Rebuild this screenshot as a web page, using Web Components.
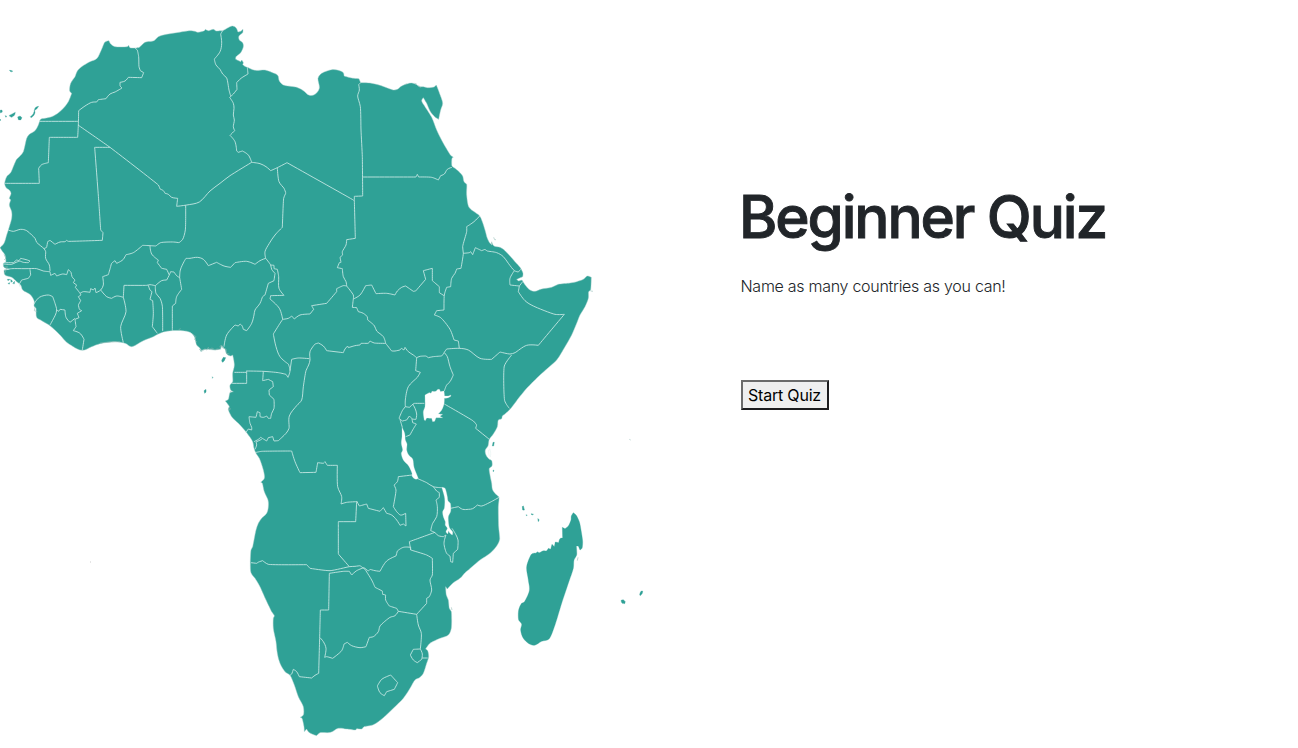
<!DOCTYPE html>
<html lang="en">
<head>
<meta charset="utf-8">
<title>Beginner Quiz</title>
<style>
html, body { margin: 0; height: 100%; background: #fff; overflow: hidden; }
body { font-family: Inter, "Liberation Sans", sans-serif; color: #212529; }
</style>
</head>
<body>
<quiz-page>
  <africa-map slot="map"></africa-map>
  <quiz-intro slot="intro">
    <span slot="title">Beginner Quiz</span>
    <span slot="hint">Name as many countries as you can!</span>
    <quiz-button slot="action">Start Quiz</quiz-button>
  </quiz-intro>
</quiz-page>
<script>
class QuizPage extends HTMLElement {
  constructor() {
    super();
    this.attachShadow({ mode: 'open' }).innerHTML = `
      <style>
        :host { display: grid; grid-template-columns: 649px 1fr; height: 748px; overflow: hidden; }
      </style>
      <slot name="map"></slot><slot name="intro"></slot>`;
  }
}

class QuizIntro extends HTMLElement {
  constructor() {
    super();
    this.attachShadow({ mode: 'open' }).innerHTML = `
      <style>
        :host { display: flex; flex-direction: column; align-items: flex-start; padding: 181px 0 0 91.5px; }
        h1 { margin: 0 0 0 -1.5px; font-size: 58.5px; line-height: 72px; font-weight: 500; letter-spacing: -2.1px; -webkit-text-stroke: .9px currentColor; white-space: nowrap; }
        p { margin: 21px 0 0; font-size: 16px; line-height: 24px; font-weight: 300; letter-spacing: -.28px; white-space: nowrap; }
        .action { margin-top: 82px; }
      </style>
      <h1><slot name="title"></slot></h1>
      <p><slot name="hint"></slot></p>
      <div class="action"><slot name="action"></slot></div>`;
  }
}

class QuizButton extends HTMLElement {
  constructor() {
    super();
    this.attachShadow({ mode: 'open' }).innerHTML = `
      <style>
        :host { display: block; }
        button { display: block; box-sizing: border-box; width: 88px; height: 30px; margin: 0; padding: 0;
          font: 400 16px/24px Inter, sans-serif; letter-spacing: -.2px; color: #000; background: #efefef; white-space: nowrap;
          border: 2px solid; border-color: #6b6b6b #1c1c1e #1c1c1e #6b6b6b; border-radius: 0; }
      </style>
      <button type="button"><slot></slot></button>`;
  }
}

/* Map sheets: origin of each sheet in page units; points on a sheet are in thirds of a unit. */
const SHEETS = { A: [0, 10], B: [210, 10], C: [0, 180], D: [200, 180], E: [400, 150], F: [200, 340], G: [390, 340], H: [240, 530], I: [500, 420] };

/* Handle vector at a vertex: rounds gentle turns, keeps sharp corners and long straight runs. */
function handle(a, b, c, limit) {
  if (!a || !c) return [0, 0];
  const u = [b[0] - a[0], b[1] - a[1]], v = [c[0] - b[0], c[1] - b[1]];
  const lu = Math.hypot(...u), lv = Math.hypot(...v);
  if (!lu || !lv || (u[0] * v[0] + u[1] * v[1]) / (lu * lv) < limit) return [0, 0];
  const t = [u[0] / lu + v[0] / lv, u[1] / lu + v[1] / lv];
  const k = Math.min(0.36 * Math.min(lu, lv), 4) / Math.hypot(...t);
  return [t[0] * k, t[1] * k];
}

/* "A 1,2 3,4 B 5,6" -> SVG path data; a sheet letter switches the origin, ";" lifts the pen. */
function trace(text, close) {
  let origin = [0, 0];
  return text.split(';').map(line => {
    const p = [];
    for (const token of line.trim().split(/\s+/)) {
      if (SHEETS[token]) { origin = SHEETS[token]; continue; }
      if (!token) continue;
      const [x, y] = token.split(',').map(Number);
      p.push([origin[0] + x / 3, origin[1] + y / 3]);
    }
    const n = p.length;
    const at = i => close ? p[(i + n) % n] : p[i];
    const h = p.map((q, i) => handle(at(i - 1), q, at(i + 1), close ? 0.5 : 0.8));
    let d = 'M' + p[0].map(v => v.toFixed(2)).join(' ');
    for (let i = 1; i < n + (close ? 1 : 0); i++) {
      const a = p[i - 1], b = p[i % n], ha = h[i - 1], hb = h[i % n];
      d += 'C' + [a[0] + ha[0], a[1] + ha[1], b[0] - hb[0], b[1] - hb[1], b[0], b[1]].map(v => v.toFixed(2)).join(' ');
    }
    return d + (close ? 'Z' : '');
  }).join('');
}

const LAND = `A 32,570 28,565 33,550 28,540 20,535 14,522 20,500 32,488 42,465 50,448 58,440 70,425 80,385 88,373 105,362 115,345 122,328 135,325 160,318 185,300 205,275 215,250 209,243 212,220 225,200 232,183 245,170 270,155 290,146 303,122 315,96 327,92 333,103 345,110 382,110 386,106 390,113 405,114 418,112 435,97 462,92 475,80 500,73 530,68 570,62 585,64 592,67 612,63 616,58 625,62 640,58 648,63 660,62
B 38,62 60,50 68,48 78,53 84,66 92,64 99,58 98,68 87,78 88,90 98,98 100,110 92,128 78,140 77,148 92,155 95,150 100,158 98,163 103,168 112,172 135,181 165,180 185,187 203,196 208,213 220,225 260,232 280,242 298,256 315,253 328,235 324,205 335,190 365,179 385,181 400,188 402,198 425,204 447,206 452,218 480,219 510,226 550,240 562,238 575,228 590,222 605,219 620,224 628,230 640,230 652,233 672,231 679,225 688,248 698,280 692,300 686,328 674,320 660,303 650,280 640,263 635,272 645,290 665,322 680,360 700,400 722,436 730,442 726,445 726,468 735,475 750,488
E 188,78 192,95 200,103 200,135 207,172 225,187 239,198 247,215 255,240 262,265 270,280 276,285 275,277 282,288 300,292 315,302 330,318 345,335 360,352 369,370 368,380 350,388 355,393 366,390 378,408 390,420 405,424 425,417 455,412 475,403 510,399 530,395 550,388 562,378 574,382 572,420 566,425 565,445 555,470 540,495 530,520 515,555 495,590 470,630
G 450,105 410,145 380,182 360,208 345,222 337,228 335,236 325,240 322,260 308,285 298,298 294,318 286,330 288,345 297,357 305,362 306,378 298,385 300,405 305,430 308,450 320,465 327,472 325,500 326,560 329,598 322,615 300,640 270,660 235,690
H 675,128 660,145 640,158 622,177 617,170 619,195 625,210 628,235 634,245 634,295 625,315 600,325 570,340 557,357 563,362 566,380 560,400 550,430 540,442 525,450 510,475 490,505 460,535 430,563 400,584 372,590 365,597 350,596 347,600 320,597 295,595 272,607 240,608 230,617 218,613 205,605 200,597 193,605 192,590 186,565 180,562 190,555 190,530 175,500 163,465 150,436 135,425 120,400 112,370 108,335 100,295 100,265 103,257 95,245 78,210 60,170 45,145 33,128 31,98 33,60 38,50 48,0
F 175,550 185,535 200,520 205,500 204,480 193,455 187,430 182,427 193,415 190,390 178,355 168,340 162,325 158,305 140,278 115,250 95,230 85,208 88,200 76,183 85,178 90,158 100,155 92,150 90,135 98,125 98,100 103,75 98,45 92,48 80,42 75,28 65,18 62,27 45,30 20,28 0,32
C 605,515 600,505 590,495 583,470 570,457 548,452 515,452 490,456 475,462 460,470 430,482 395,500 375,490 345,485 300,491 275,500 247,511 220,500 200,487 180,465 150,437 125,422 110,412 108,385 102,378 103,365 92,345 68,330 62,315 50,305 35,292 15,285 12,270 28,268 12,262 10,250 18,245 15,225 8,215 0,203 12,190 20,165 25,150 35,115 35,95 28,75`;

const ISLANDS = `I 220,278 228,285 238,305 243,330 248,365 246,385 240,390 235,378 229,378 230,405 222,420 220,445 205,490 185,550 165,615 147,657 125,664 100,676 72,658 62,630 65,612 56,600 56,570 65,550 72,547 88,512 85,480 80,440 95,402 108,399 112,395 118,398 128,393 140,392 145,385 152,388 156,373 163,380 166,366 176,368 180,356 188,354 187,322 195,326 205,318 213,300 214,288
; 363,541 370,539 376,545 374,551 366,549 ; 419,524 423,514 428,513 427,520 421,527 ; 67,260 70,258 73,270 69,270 ; 114,296 117,299 115,303 ; 94,282 101,283 96,285 ; 78,284 82,286 79,287
; A 28,181 36,182 39,184 33,186 ; 0,301 6,300 7,306 1,309 ; 28,316 38,311 46,307 43,316 35,322 29,319 ; 53,321 60,318 66,323 62,330 55,329 ; 91,320 100,311 103,301 105,308 100,318 93,323 ; 103,302 106,293 116,289 110,297 ; 15,317 20,318 18,322 ; 0,328 3,330 1,332
; F 65,62 70,52 77,53 73,62 68,67 ; 12,152 18,148 18,156 14,160 ; 37,110 39,113 37,115
; G 397,500 400,498 403,510 398,510 ; 424,521 429,523 426,525 ; 444,536 447,542 445,545 ; 309,307 313,307 311,318 307,318 ; 309,390 312,391 310,396
; C 22,298 30,298 24,302 ; 32,298 38,304 33,307 ; 24,310 30,308 27,313 ; 38,310 44,304 43,312`;

const LAKES = `G 105,165 118,158 123,160 126,154 138,154 142,149 148,148 152,155 162,153 164,168 175,168 182,165 183,168 175,173 163,175 162,192 155,210 145,222 158,223 150,229 158,233 138,233 134,244 128,245 125,235 110,234 106,242 103,240 100,215 105,200
; 36,262 44,280 46,300 51,312 50,330 56,345 68,357 72,382 85,415 78,418 67,410 66,400 56,378 40,360 34,340 38,330 34,310 36,290
; 155,442 165,445 172,470 174,482 181,490 182,514 175,530 178,562 188,576 187,585 180,580 176,572 173,582 168,575 172,565 166,556 166,545 160,530 158,515 163,505 164,475
; 296,330 300,327 302,340 301,350 297,345`;

const BORDERS = `A 405,114 412,120 416,140 417,170 421,182 431,188 425,203 385,202 375,213 360,217 360,228 366,234 345,246 330,252 318,266 295,269 290,276 275,277 255,288 236,302 235,345 233,382 148,382 145,458 125,464 116,475 118,520 15,520
; 118,334 234,334
; 234,345 330,412 475,525 480,537 490,542 495,550 505,553 515,562 533,565 C 530,79 560,75 598,66 630,33 B 30,520 60,497 125,457 150,461 168,470 182,482 202,473 231,458 430,570 D 462,62
; A 330,412 284,412 296,570 C 302,150 309,158 307,181 205,184 200,181 195,185 180,186 165,193 150,181 143,185 140,202 132,206
; B 38,62 32,72 35,100 30,125 13,147 18,165 30,178 38,192 50,204 57,240 62,258
; 112,172 114,192 93,205 80,218 81,238 70,252 59,262 70,280 72,295 70,315 73,330 70,350 74,362 60,376 75,395 80,423 85,427 97,423 115,435 125,457
; 202,473 207,515 222,535 227,548 D 257,40 251,55 247,142 225,165 208,190 195,215 197,235
; B 452,218 446,224 448,240 443,258 451,290 453,360 457,440 458,558 433,559 433,569 D 463,62 466,175 440,179 438,195 427,215 428,225 420,232 423,247 418,248 412,263 427,266 430,290 438,305 440,318
; B 458,501 618,501 622,493 626,501 665,502 685,510 692,497 703,492 712,478 726,472
; C 25,150 40,154 62,148 80,152 95,165 105,175 110,187 132,206 137,215 137,235 148,255 150,273
; 12,248 40,248 50,240 57,242 62,235 75,238 82,240 90,243 85,248 70,247 60,243 48,247 35,253 10,252
; 12,270 35,266 75,266 110,266 130,273 150,275 ; 90,268 92,285 85,295 65,300 58,312 60,320
; 150,275 152,286 165,280 170,288 188,282 200,284 205,269 213,277 216,290 225,300 220,308 230,315 226,322 235,333 240,340 250,335 270,337 272,326 280,330 285,324 288,338 302,330 310,315 308,290 325,284 332,260 335,250 345,242 350,250 362,244 370,238 378,224 400,218 428,196 450,197 468,198 482,188 520,186 537,188 548,178 556,150 557,75
; 302,330 320,350 335,355 350,348 370,352 372,316 440,316 450,314 466,317 485,302 500,300 508,285 500,268 485,265 472,248 475,240 455,222 450,197
; 508,285 512,275 522,276 530,287 539,293 541,270 552,245 558,235 570,235 592,232 D 10,238 25,257 50,247 72,258 92,262 105,248 140,244 165,253 180,242 197,235
; C 539,293 545,328 530,350 527,370 517,378 517,452 ; 466,317 468,340 480,355 487,378 488,453 ; 445,316 450,330 456,335 450,358 458,362 460,400 457,440 472,460
; 370,352 378,395 362,440 370,488
; 240,340 243,345 235,350 242,362 235,375 238,388 245,392 232,400 237,413 225,418 228,440 220,452 240,460 252,478 247,510
; 102,372 118,352 145,345 158,350 165,370 170,390 166,405 150,435 ; 170,390 176,394 180,388 195,390 198,412 210,427 225,415
; D 197,235 212,255 215,268 225,280 222,302 205,310 195,345 188,350 180,370 165,390 162,405 155,430 140,452 130,448 126,437 120,432 115,438 105,435 80,465 72,500
; 212,255 222,256 222,266 232,268 236,290 237,325 252,346 212,347 210,357 238,385 248,418
; 248,418 240,430 220,462 228,500 240,530 262,550 F 265,72 270,92 264,112
; D 248,418 265,415 275,408 283,417 300,405 330,402 341,388 335,377 380,370 410,335 410,326 430,317 440,318 460,345 460,357 480,345 497,317 515,315 528,341 560,340 585,345 592,333 E 5,412 17,408 40,424 47,423 77,388 70,362 97,355 97,392 118,410 118,428 132,437
; D 460,357 457,382 470,383 475,395 490,400 502,410 503,420 523,437 530,453 550,470 557,490
; 557,490 523,489 510,483 505,490 483,490 480,495 465,497 445,503 443,498 435,507 430,518 380,512 370,498 355,489 345,492 330,515 330,540 F 326,75 318,92 310,140 305,180 290,197 268,228 267,265 258,280 235,302 222,303 218,290 205,293 200,303 182,292 175,298 162,305
; D 557,490 575,513 G 15,33 30,30 34,25 42,30 45,22 55,35 70,45 80,53 90,49 108,48 115,53 130,50 155,48 163,38
; E 239,198 222,215 200,230 200,245 188,290 190,310 183,355 170,357 165,370 155,385 152,410 140,412 133,435 132,480 110,482 103,495 122,503 150,538 162,570 175,573 178,595
; 190,310 208,308 212,305 218,314 226,293 245,302 255,298 262,303 290,308 310,320 325,340 343,362 355,366 362,358
; 343,362 330,385 330,405 358,408 368,395 ; 358,408 355,425 375,452 400,468 465,493 493,493 415,586 380,586 345,608 330,612 300,606 275,628 240,625 205,600 178,595 140,597 132,608
; G 365,45 343,78 344,182 358,205 ; 163,38 172,50 180,80 190,105 180,125 170,135 163,153
; 80,53 77,92 91,97 82,112 55,140 46,180 46,200 58,202 72,190 103,190 ; 46,200 37,212 27,235 37,243 50,240 58,228 68,237 78,238 80,222 75,205 68,192 ; 66,237 68,248 79,252 68,270 60,285 47,290 ; 30,238 37,262
; 163,192 250,243 260,255 257,265 298,298 ; 83,416 110,428 130,440 155,443
; 182,505 205,500 218,508 235,508 248,506 262,495 275,498 300,487 327,472
; 130,440 140,453 148,458 148,472 138,480 142,500 140,530 128,550 122,572 135,578 145,587 160,590 168,585 162,610 170,640 180,648 182,665 188,667 190,640 203,628 204,600 197,583 186,565
; 135,577 58,605 62,630
; 75,404 25,410 22,425 12,435 18,450 10,500 20,515 30,525 36,525 47,520 48,558 40,552 30,556 20,540 5,525 F 560,520 550,503 540,514 505,505 500,492 478,498 470,483
; 165,338 185,334 275,333 285,365 300,398 348,397 353,368 370,370 375,365 382,376 412,376 413,440 425,470 423,492 440,487 470,485 467,545 415,545 H 295,0 295,72 328,110
; F 165,328 170,315 168,306 185,298
; 95,130 140,130 140,92 ; 103,97 140,97 ; 140,93 190,94 235,98 258,103 264,112 ; 270,92 275,58 295,54 328,56
; 190,94 188,122 205,118 218,125 220,140 207,150 208,165 222,178 222,205 215,220 212,235 205,235 200,228 190,232 180,230 180,218 172,215 168,232 147,230 150,250 155,262 155,270 145,267 138,277
; H 33,98 50,100 56,96 68,92 85,103 200,104 210,115 270,122 328,110 345,109 360,107 367,112 375,118
; 266,240 268,130 310,124 328,124 335,135 350,122 372,113 385,123 390,118 405,122 420,124 440,93 468,78 472,63 490,52 512,52 512,60 560,75 577,85 577,135 570,150 575,180 568,200 560,205 560,220 530,253 475,244 470,235 448,228 437,210 437,195 428,193 427,183 405,172 395,150 375,118
; 266,240 241,240 239,322 236,430 225,436 215,444 178,440 170,425 160,418 155,432 150,436
; 239,322 250,335 258,355 254,382 260,380 278,385 305,362 312,342 322,337 335,347 360,353 378,350 388,322 400,320 415,305 420,288 450,262 465,257 475,244
; 530,253 535,285 544,310 541,357 520,358 511,375 520,390 532,398 545,388 547,372 541,357 ; 546,384 563,384
; 452,435 473,458 463,478 440,485 433,497 420,488 412,468 425,448 440,440 452,435`;

const SKERRIES = `E 275,283 275,275 ; 281,262 284,269 288,269 ; 572,423 579,424 ; I 388,58 392,60 ; 234,412 232,422 ; C 597,508 608,512 615,506 620,510 625,502 628,508 636,504 645,510 652,507 658,508 ; F 62,28 60,18 66,16 68,24 78,27 80,40 88,42 ; 95,150 90,158 ; 86,202 88,212 ; 92,205 89,210 ; H 634,232 636,240 ; B 585,224 590,221 ; 614,220 620,222 ; 626,226 632,234 ; C 12,224 18,234 12,240 ; 12,262 22,260 14,280 ; 106,380 103,392 112,395 ; 578,462 588,470 584,478 590,486 ; 300,489 330,486 360,485 ; 536,449 542,446`;

class AfricaMap extends HTMLElement {
  constructor() {
    super();
    this.attachShadow({ mode: 'open' }).innerHTML = `
      <style>
        :host { display: block; }
        svg { display: block; }
        .land { fill: #2fa196; stroke: #a9d3ce; stroke-width: .45; stroke-linejoin: round; }
        .isle { fill: #2fa196; stroke: #2fa196; stroke-width: .3; }
        .lake { fill: #fff; stroke: #cfe7e4; stroke-width: .3; }
        .border { fill: none; stroke: #cdebe7; stroke-width: .85; stroke-linejoin: round; }
        .skerry { fill: none; stroke: #8fb9b4; stroke-width: .6; }
      </style>
      <svg width="649" height="748" viewBox="0 0 649 748" role="img" aria-label="Map of Africa">
        <path class="land" d="${trace(LAND, true)}"/>
        <path class="isle" d="${trace(ISLANDS, true)}"/>
        <path class="border" d="${trace(BORDERS, false)}"/>
        <path class="lake" d="${trace(LAKES, true)}"/>
        <path class="skerry" d="${trace(SKERRIES, false)}"/>
        <path d="M90 562h1" stroke="#ccc"/>
      </svg>`;
  }
}

customElements.define('quiz-page', QuizPage);
customElements.define('quiz-intro', QuizIntro);
customElements.define('quiz-button', QuizButton);
customElements.define('africa-map', AfricaMap);
</script>
</body>
</html>
